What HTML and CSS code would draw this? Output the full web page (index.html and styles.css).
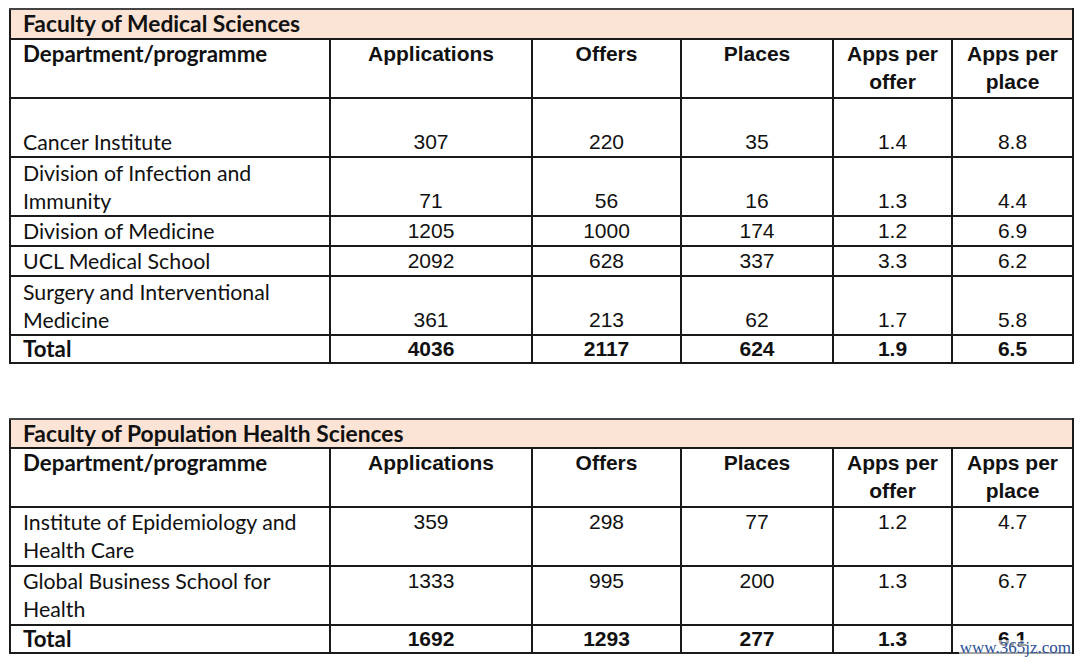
FILE: index.html
```html
<!DOCTYPE html>
<html>
<head>
<meta charset="utf-8">
<link rel="stylesheet" href="styles.css">
</head>
<body>
<div class="page">
<table class="grid">
  <colgroup><col class="c1"><col class="c2"><col class="c3"><col class="c4"><col class="c5"><col class="c6"></colgroup>
  <tr class="r-title"><td colspan="6" class="title">Faculty of Medical Sciences</td></tr>
  <tr class="r2">
    <td class="dept bold">Department/programme</td>
    <td class="num bold">Applications</td>
    <td class="num bold">Offers</td>
    <td class="num bold">Places</td>
    <td class="num bold">Apps per<br>offer</td>
    <td class="num bold">Apps per<br>place</td>
  </tr>
  <tr class="r2 bot">
    <td class="dept">Cancer Institute</td>
    <td class="num">307</td><td class="num">220</td><td class="num">35</td><td class="num">1.4</td><td class="num">8.8</td>
  </tr>
  <tr class="r2 bot">
    <td class="dept">Division of Infection and<br>Immunity</td>
    <td class="num">71</td><td class="num">56</td><td class="num">16</td><td class="num">1.3</td><td class="num">4.4</td>
  </tr>
  <tr class="r1">
    <td class="dept">Division of Medicine</td>
    <td class="num">1205</td><td class="num">1000</td><td class="num">174</td><td class="num">1.2</td><td class="num">6.9</td>
  </tr>
  <tr class="r1">
    <td class="dept">UCL Medical School</td>
    <td class="num">2092</td><td class="num">628</td><td class="num">337</td><td class="num">3.3</td><td class="num">6.2</td>
  </tr>
  <tr class="r2 bot">
    <td class="dept">Surgery and Interventional<br>Medicine</td>
    <td class="num">361</td><td class="num">213</td><td class="num">62</td><td class="num">1.7</td><td class="num">5.8</td>
  </tr>
  <tr class="r1 total">
    <td class="dept bold">Total</td>
    <td class="num bold">4036</td><td class="num bold">2117</td><td class="num bold">624</td><td class="num bold">1.9</td><td class="num bold">6.5</td>
  </tr>
</table>

<table class="grid second">
  <colgroup><col class="c1"><col class="c2"><col class="c3"><col class="c4"><col class="c5"><col class="c6"></colgroup>
  <tr class="r-title"><td colspan="6" class="title">Faculty of Population Health Sciences</td></tr>
  <tr class="r2">
    <td class="dept bold">Department/programme</td>
    <td class="num bold">Applications</td>
    <td class="num bold">Offers</td>
    <td class="num bold">Places</td>
    <td class="num bold">Apps per<br>offer</td>
    <td class="num bold">Apps per<br>place</td>
  </tr>
  <tr class="r2">
    <td class="dept">Institute of Epidemiology and<br>Health Care</td>
    <td class="num">359</td><td class="num">298</td><td class="num">77</td><td class="num">1.2</td><td class="num">4.7</td>
  </tr>
  <tr class="r2">
    <td class="dept">Global Business School for<br>Health</td>
    <td class="num">1333</td><td class="num">995</td><td class="num">200</td><td class="num">1.3</td><td class="num">6.7</td>
  </tr>
  <tr class="r1 total">
    <td class="dept bold">Total</td>
    <td class="num bold">1692</td><td class="num bold">1293</td><td class="num bold">277</td><td class="num bold">1.3</td><td class="num bold">6.1</td>
  </tr>
</table>
<div class="mark">www.365jz.com</div>
</div>
</body>
</html>
```
FILE: styles.css
```css
html, body {
  margin: 0;
  padding: 0;
  background: #fff;
}
.page {
  position: relative;
  width: 1080px;
  height: 664px;
  padding: 8px 0 0 9px;
  box-sizing: border-box;
  overflow: hidden;
}
.grid {
  border-collapse: collapse;
  table-layout: fixed;
  width: 1063px;
  color: #111;
}
.grid.second {
  margin-top: 54px;
}
.c1 { width: 320px; }
.c2 { width: 202px; }
.c3 { width: 149px; }
.c4 { width: 152px; }
.c5 { width: 119px; }
.c6 { width: 121px; }
.grid td {
  border: 2px solid #1a1a1a;
  padding: 0 12px;
  vertical-align: top;
  line-height: 28px;
  font-size: 21px;
  box-sizing: border-box;
}
.grid tr:first-child td { border-top-color: #444; }
.grid td.title {
  background: #fbe4d5;
  font-family: "Lato", "Liberation Sans", sans-serif;
  font-weight: 700;
  font-size: 22.8px;
  line-height: 27px;
  height: 30px;
}
.second td.title { height: 29px; }
.r2 td { height: 59px; }
.r1 td { height: 30px; }
.total td { height: 28px; line-height: 26px; }
.bot td { vertical-align: bottom; }
.dept {
  font-family: "Lato", "Liberation Sans", sans-serif;
  text-align: left;
}
.grid td.dept { font-size: 21.3px; }
.grid td.dept.bold { font-size: 22.3px; }
.num {
  font-family: "Liberation Sans", Arial, sans-serif;
  text-align: center;
}
.bold { font-weight: 700; }
.mark {
  position: absolute;
  right: 8px;
  bottom: 8px;
  font-family: "Liberation Serif", serif;
  font-size: 17px;
  line-height: 16px;
  color: #2b4f94;
  background: rgba(255,255,255,0.6);
  padding: 0 1px;
}
```
